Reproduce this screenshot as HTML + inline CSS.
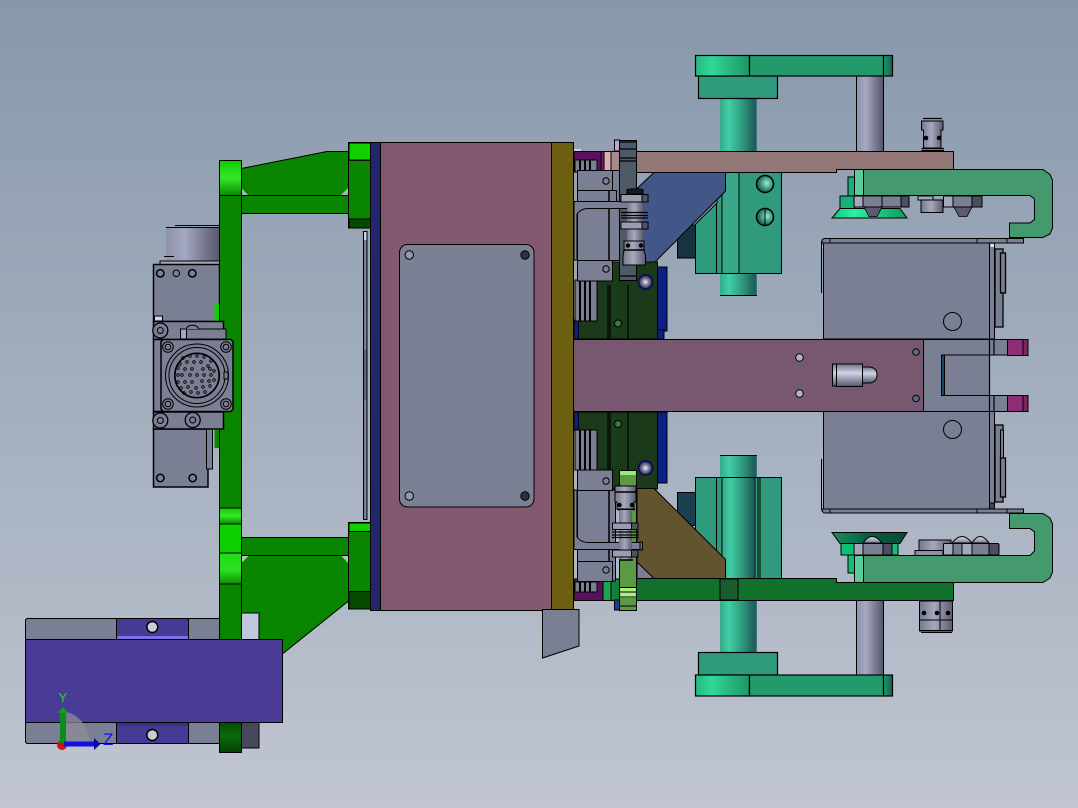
<!DOCTYPE html>
<html><head><meta charset="utf-8"><style>
html,body{margin:0;padding:0;background:#a0acbc}
svg{display:block}
text{font-family:"Liberation Sans",sans-serif}
</style></head><body>
<svg width="1078" height="808" viewBox="0 0 1078 808" xmlns="http://www.w3.org/2000/svg">
<defs>
<linearGradient id="bg" x1="0" y1="0" x2="0" y2="1"><stop offset="0" stop-color="#8798ab"/><stop offset="1" stop-color="#c0c5d1"/></linearGradient>
<linearGradient id="teal" x1="0" y1="0" x2="1" y2="0"><stop offset="0" stop-color="#35a98c"/><stop offset=".25" stop-color="#40cfa5"/><stop offset=".6" stop-color="#2f9a7e"/><stop offset=".95" stop-color="#1f5a58"/><stop offset="1" stop-color="#3f7f80"/></linearGradient>
<linearGradient id="gcyl" x1="0" y1="0" x2="1" y2="0"><stop offset="0" stop-color="#8e92ab"/><stop offset=".35" stop-color="#a4a8c2"/><stop offset="1" stop-color="#55546a"/></linearGradient>
<linearGradient id="flange" x1="0" y1="0" x2="1" y2="0"><stop offset="0" stop-color="#25b880"/><stop offset=".3" stop-color="#30d896"/><stop offset="1" stop-color="#1f9468"/></linearGradient>
<linearGradient id="fend" x1="0" y1="0" x2="1" y2="0"><stop offset="0" stop-color="#22986c"/><stop offset="1" stop-color="#176048"/></linearGradient>
<linearGradient id="ghi" x1="0" y1="0" x2="0" y2="1"><stop offset="0" stop-color="#0ccc02"/><stop offset=".5" stop-color="#36e82a"/><stop offset="1" stop-color="#088a00"/></linearGradient>
<linearGradient id="ghi2" x1="0" y1="0" x2="0" y2="1"><stop offset="0" stop-color="#22dc18"/><stop offset=".55" stop-color="#2ce020"/><stop offset="1" stop-color="#0a8e02"/></linearGradient>
<linearGradient id="gdark" x1="0" y1="0" x2="0" y2="1"><stop offset="0" stop-color="#044a04"/><stop offset=".45" stop-color="#0a6c0a"/><stop offset="1" stop-color="#033f03"/></linearGradient>
<linearGradient id="bolt" x1="0" y1="0" x2="1" y2="0"><stop offset="0" stop-color="#75778c"/><stop offset=".45" stop-color="#a6a8be"/><stop offset="1" stop-color="#5c5c70"/></linearGradient>
<linearGradient id="boltv" x1="0" y1="0" x2="0" y2="1"><stop offset="0" stop-color="#6f7186"/><stop offset=".4" stop-color="#d2d4e6"/><stop offset="1" stop-color="#55556a"/></linearGradient>
<linearGradient id="dome" x1="0" y1="0" x2="0" y2="1"><stop offset="0" stop-color="#d8daec"/><stop offset="1" stop-color="#7d7f96"/></linearGradient>
<linearGradient id="cup" x1="0" y1="0" x2="1" y2="0"><stop offset="0" stop-color="#10c878"/><stop offset=".3" stop-color="#2cf0a4"/><stop offset="1" stop-color="#0c9a60"/></linearGradient>
<linearGradient id="cup2" x1="0" y1="0" x2="1" y2="0"><stop offset="0" stop-color="#149060"/><stop offset=".5" stop-color="#0a5a40"/><stop offset="1" stop-color="#084a38"/></linearGradient>
<radialGradient id="ball"><stop offset="0" stop-color="#f0f2fa"/><stop offset=".55" stop-color="#6f7290"/><stop offset="1" stop-color="#2a2c50"/></radialGradient>
<radialGradient id="tball" cx=".6" cy=".45"><stop offset="0" stop-color="#8af0d0"/><stop offset="1" stop-color="#1f6a5c"/></radialGradient>
</defs>
<rect width="1078" height="808" fill="url(#bg)"/>

<!-- teal + gray cylinders -->
<g stroke="#000" stroke-width="1">
<rect x="720" y="96" width="37" height="200" fill="url(#teal)" stroke="none"/>
<rect x="720" y="455" width="37" height="200" fill="url(#teal)" stroke="none"/>
<path d="M720 295.500H757M720 455.500H757" fill="none"/>
<rect x="856.500" y="74" width="27" height="78" fill="url(#gcyl)"/>
<rect x="856.500" y="598" width="27" height="78" fill="url(#gcyl)"/>
</g>

<!-- flanges -->
<g stroke="#000" stroke-width="1.200">
<rect x="698.500" y="76" width="79" height="22.500" fill="#2f9a7c"/>
<rect x="695.500" y="55.500" width="54" height="20.500" fill="url(#flange)"/>
<rect x="749.500" y="55.500" width="134" height="20.500" fill="#229a6c"/>
<rect x="883.500" y="55.500" width="9" height="20.500" fill="url(#fend)"/>
<rect x="698.500" y="652.500" width="79" height="22.500" fill="#2f9a7c"/>
<rect x="695.500" y="675" width="54" height="21" fill="url(#flange)"/>
<rect x="749.500" y="675" width="134" height="21" fill="#229a6c"/>
<rect x="883.500" y="675" width="9" height="21" fill="url(#fend)"/>
</g>

<!-- left gray/purple carrier -->
<g stroke="#000" stroke-width="1">
<path d="M27 618.500H219.500V743.500H27L25.500 742V620Z" fill="#7b7f94"/>
<rect x="116.500" y="618.500" width="72" height="21" fill="#463b94"/>
<rect x="116.500" y="722.500" width="72" height="21" fill="#463b94"/>
<rect x="117" y="636" width="71" height="3" fill="#7f70e8" stroke="none"/>
<rect x="117" y="723" width="71" height="2.500" fill="#3a3078" stroke="none"/>
<circle cx="152.300" cy="627" r="5.500" fill="#c8ccd4" stroke-width="1.500"/>
<circle cx="152.300" cy="735" r="5.500" fill="#c8ccd4" stroke-width="1.500"/>
</g>

<!-- motor -->
<g stroke="#000" stroke-width="1">
<rect x="166" y="227" width="54" height="35" fill="url(#gcyl)" stroke="none"/>
<path d="M166 227.500H219M175 225.500H219M164 256.500H174" fill="none"/>
<rect x="160" y="261" width="60" height="3.500" fill="#a4a8bc"/>
<rect x="153.500" y="264.500" width="66" height="57" fill="#7b7f94" stroke-width="1.500"/>
<rect x="153.500" y="429" width="54.500" height="58" fill="#7b7f94" stroke-width="1.500"/>
<rect x="206.500" y="429" width="6" height="40" fill="#7b7f94"/>
<rect x="214.500" y="304" width="4.500" height="18" fill="#10d000" stroke="none"/>
<rect x="214.500" y="430" width="4.500" height="18" fill="#0a8500" stroke="none"/>
<g fill="none" stroke-width="1.500">
<circle cx="160.300" cy="273.300" r="3.700"/><circle cx="176.300" cy="273.300" r="3.300" stroke-width="1"/><circle cx="192.300" cy="273.300" r="3.700"/>
<circle cx="160.300" cy="478" r="3.700"/><circle cx="192.700" cy="478" r="3.700"/>
</g>
<rect x="154.500" y="316" width="8" height="5" fill="#d0d2dc"/>
</g>

<!-- green frame -->
<g stroke="#000" stroke-width="1">
<path d="M241.500 168.500L327 151.500H348.500V195.500H241.500Z" fill="#0a8500"/>
<path d="M241.500 188L248 195H241.500ZM348 188L341 195H348Z" fill="#aab4c4" stroke="none"/>
<rect x="241.500" y="195.500" width="107" height="18" fill="#0a8500"/>
<path d="M241.500 555H348.500V601L283 653.500H241.500Z" fill="#0a8500"/>
<path d="M241.500 563L249 555.500H241.500ZM348 563L341 555.500H348Z" fill="#b8bece" stroke="none"/>
<rect x="241.500" y="537.500" width="107" height="18" fill="#0a8500"/>
<rect x="241.500" y="613" width="17.500" height="27" fill="#c0c8de"/>
<rect x="241.500" y="722" width="17.500" height="26" fill="#47485a"/>
<rect x="219.500" y="160.500" width="22" height="35" fill="url(#ghi)"/>
<rect x="219.500" y="195.500" width="22" height="312.500" fill="#0a8500"/>
<rect x="219.500" y="508" width="22" height="16" fill="url(#ghi)"/>
<rect x="219.500" y="524" width="22" height="29" fill="#0cd000"/>
<rect x="219.500" y="553" width="22" height="31" fill="url(#ghi2)"/>
<rect x="219.500" y="584" width="22" height="140" fill="#0a8500"/>
<rect x="219.500" y="722" width="22" height="30.500" fill="url(#gdark)"/>
<!-- mounts -->
<rect x="348.500" y="142.500" width="22" height="85.500" fill="#0a8500"/>
<rect x="349" y="143" width="21.500" height="17" fill="#10d000"/><path d="M348.500 160.500H370.500"/>
<rect x="349" y="219" width="21.500" height="9" fill="#044a00"/>
<rect x="348.500" y="522.500" width="22" height="86.500" fill="#0a8500"/>
<rect x="349" y="523" width="21.500" height="8.500" fill="#10d000"/><path d="M348.500 531.500H370.500"/>
<rect x="349" y="591.500" width="21.500" height="17.500" fill="#044a00"/>
<!-- thin rod -->
<rect x="363.500" y="231.500" width="3.500" height="288" fill="#7b7f94"/>
<rect x="364" y="232" width="2.500" height="8" fill="#d0d4e0" stroke="none"/>
<rect x="364" y="350" width="2.500" height="50" fill="#606478" stroke="none"/>
<!-- plates -->
<rect x="370.500" y="142.500" width="10" height="468" fill="#23266c"/>
<rect x="380.500" y="142.500" width="171" height="468" fill="#835970"/>
<rect x="551.500" y="142.500" width="22" height="468" fill="#6c5f12"/>
<rect x="399.500" y="244.500" width="134.500" height="262.500" rx="8" fill="#7c8095"/>
<circle cx="409.300" cy="255" r="4.200" fill="#9498aa"/><circle cx="409.300" cy="496" r="4.200" fill="#9498aa"/>
<circle cx="525" cy="255" r="4.200" fill="#30303c"/><circle cx="525" cy="496" r="4.200" fill="#30303c"/>
<path d="M542.500 609.500H579V646L542.500 658Z" fill="#7b7f94"/>
</g>

<!-- clamps + connector over frame -->
<g stroke="#000" stroke-width="1">
<rect x="153.500" y="321.500" width="70" height="18" fill="#7b7f94" stroke-width="1.500"/>
<rect x="153.500" y="339.500" width="8" height="72" fill="#7b7f94" stroke-width="1.500"/>
<rect x="153.500" y="412" width="70" height="17" fill="#7b7f94" stroke-width="1.500"/>
<rect x="186" y="329" width="40" height="10" fill="#7b7f94"/>
<rect x="180.500" y="329" width="6" height="10" fill="#a6a9bc"/>
<circle cx="160.300" cy="330.500" r="7.500" fill="#7b7f94" stroke-width="1.300"/><circle cx="160.300" cy="330.500" r="3" fill="none"/>
<circle cx="160.300" cy="420.500" r="7.500" fill="#7b7f94" stroke-width="1.300"/><circle cx="160.300" cy="420.500" r="3" fill="none"/>
<circle cx="192.700" cy="420" r="7.500" fill="#7b7f94" stroke-width="1.300"/><circle cx="192.700" cy="420" r="3" fill="none"/>
<path d="M186 329a7 6 0 0 1 13 0" fill="#7b7f94"/>
</g>
<g stroke="#000" fill="none" stroke-width="1">
<path d="M163 339.500H231L233 342V409L231 411.500H163L161 409V342Z" fill="#7b7f94" stroke-width="1.500"/>
<circle cx="168" cy="347" r="5.300"/><circle cx="168" cy="347" r="2.800"/>
<circle cx="226" cy="347" r="5.300"/><circle cx="226" cy="347" r="2.800"/>
<circle cx="168" cy="404" r="5.300"/><circle cx="168" cy="404" r="2.800"/>
<circle cx="226" cy="404" r="5.300"/><circle cx="226" cy="404" r="2.800"/>
<circle cx="197" cy="375.500" r="31.500"/><circle cx="197" cy="375.500" r="28"/><circle cx="197" cy="375.500" r="22.200" stroke-width="1.700"/>
<rect x="224" y="372" width="4" height="7" fill="#7b7f94"/>
<g stroke-width=".8">
<circle cx="183" cy="358" r="1.300"/><circle cx="190" cy="356" r="1.300"/><circle cx="197" cy="356" r="1.300"/><circle cx="204" cy="357" r="1.300"/><circle cx="211" cy="361" r="1.300"/>
<circle cx="180" cy="364" r="1.300"/><circle cx="187" cy="362" r="1.300"/><circle cx="194" cy="362" r="1.300"/><circle cx="201" cy="362" r="1.300"/><circle cx="208" cy="366" r="1.300"/>
<circle cx="178" cy="368" r="1.300"/><circle cx="185" cy="369" r="1.300"/><circle cx="192" cy="369" r="1.300"/><circle cx="203" cy="369" r="1.300"/><circle cx="210" cy="369" r="1.300"/><circle cx="214" cy="371" r="1.300"/>
<circle cx="178" cy="375" r="1.300"/><circle cx="182" cy="375" r="1.300"/><circle cx="190" cy="375" r="1.300"/><circle cx="197" cy="375" r="1.300"/><circle cx="204" cy="375" r="1.300"/><circle cx="211" cy="375" r="1.300"/>
<circle cx="178" cy="382" r="1.300"/><circle cx="185" cy="382" r="1.300"/><circle cx="192" cy="382" r="1.300"/><circle cx="202" cy="381" r="1.300"/><circle cx="209" cy="381" r="1.300"/><circle cx="214" cy="380" r="1.300"/>
<circle cx="181" cy="388" r="1.300"/><circle cx="188" cy="387" r="1.300"/><circle cx="196" cy="388" r="1.300"/><circle cx="203" cy="387" r="1.300"/><circle cx="210" cy="386" r="1.300"/>
<circle cx="184" cy="393" r="1.300"/><circle cx="191" cy="392" r="1.300"/><circle cx="198" cy="393" r="1.300"/><circle cx="205" cy="392" r="1.300"/>
</g>
</g>

<!-- purple front block -->
<rect x="25.500" y="639.500" width="257" height="83" fill="#4a3c96" stroke="#000" stroke-width="1"/>

<!-- green/blue blocks behind slides -->
<g stroke="#000" stroke-width="1">
<rect x="657.500" y="267" width="9.500" height="64" fill="#0c1f85"/><rect x="657.500" y="330" width="6.500" height="9" fill="#0c1f85"/>
<rect x="657.500" y="412" width="9.500" height="71" fill="#0c1f85"/>
<rect x="574" y="320" width="5" height="19" fill="#0c1f85"/><rect x="574" y="412" width="5" height="18" fill="#0c1f85"/>
<rect x="578.500" y="262" width="79" height="77" fill="#1a3a1a"/>
<rect x="578.500" y="412" width="79" height="77" fill="#1a3a1a"/>
<path d="M608 285V339M610 285V339M628 285V339M608 412V470M610 412V470M628 412V470" stroke-width="1.200"/>
<circle cx="618" cy="323.500" r="3.500" fill="#3c7a3c"/>
<circle cx="618" cy="424" r="3.500" fill="#3c7a3c"/>
</g>

<!-- teal blocks -->
<g stroke="#000" stroke-width="1">
<rect x="677.500" y="225" width="18" height="33" fill="#15343f"/>
<rect x="677.500" y="492.500" width="18" height="33" fill="#1a3f4e"/>
<path d="M695.500 224L717 203V172.500H781.500V273.500H695.500Z" fill="#2f9a7c"/>
<rect x="722" y="172.500" width="17" height="101" fill="#3aa788"/>
<path d="M716.500 203V273M722 195V273M739 172V273" fill="none"/>
<rect x="695.500" y="477.500" width="86" height="101" fill="#2f9a7c"/>
<rect x="722" y="477.500" width="33" height="101" fill="url(#teal)" stroke="none"/>
<path d="M716.500 477V578M722 477V578M755 477V578M758 477V578M760 477V578M695.500 477.500H781.500" fill="none"/>
<circle cx="765" cy="184" r="8.500" fill="url(#tball)" stroke-width="1.500"/>
<circle cx="765" cy="217" r="8.500" fill="url(#tball)" stroke-width="1.500"/><path d="M765 209V225"/>
<path d="M654 172.500H725.500V191L655 262H637V188.500Z" fill="#425688"/>
<path d="M654 488.500L725.500 559.500V578.500H637V488.500Z" fill="#62542f"/>
<path d="M637 562L654 578.500H637Z" fill="#7b7f94"/>
</g>

<!-- upper and lower bars -->
<g stroke="#000" stroke-width="1">
<path d="M636 151.500H953.500V169.500H836.500V172.500H636Z" fill="#937676"/>
<path d="M636 578.500H836.500V582.500H953.500V600.500H636Z" fill="#10702c"/>
<rect x="720" y="579" width="18" height="21" fill="#1a5c30"/>
<rect x="574" y="151.500" width="27" height="20.500" fill="#5a1060"/>
<rect x="601" y="151.500" width="3" height="20.500" fill="#7a1a6a"/>
<rect x="604" y="151.500" width="7" height="20.500" fill="#dcb0b0"/>
<rect x="611" y="151.500" width="9" height="20.500" fill="#a88a8a"/>
<rect x="574" y="149" width="7" height="2" fill="#d0d4e0" stroke="none"/>
<rect x="574" y="579" width="29" height="21.500" fill="#5a1060"/>
<rect x="603" y="579" width="8" height="21.500" fill="#16a84a"/>
<rect x="611" y="579" width="9" height="21.500" fill="#128038"/>
<rect x="614.500" y="140" width="5" height="11" fill="#c0a8d0"/>
<rect x="614.500" y="600" width="5" height="10" fill="#1e3a9a"/>
<rect x="619.500" y="140.500" width="17" height="140" fill="#4f5a68"/>
<path d="M620 142H636M620 149H636M620 158H636M620 161H636M620 276H636" stroke-width="1.200"/>
<rect x="619.500" y="470.500" width="17" height="140" fill="#5a9a44"/>
<rect x="620" y="471" width="16" height="4" fill="#96ee70" stroke="none"/>
<rect x="620" y="588" width="16" height="10" fill="#a8f080" stroke="none"/>
<path d="M620 587.500H636M620 592H636M620 597H636M620 606H636" stroke-width="1"/>
</g>

<!-- fins -->
<g stroke="#000" stroke-width="1">
<g fill="#7b7f94">
<rect x="575" y="160" width="22" height="12"/><rect x="575" y="280" width="22" height="41"/>
<rect x="575" y="430" width="22" height="40"/><rect x="575" y="582" width="22" height="10"/>
</g>
<path d="M580 160V172M585 160V172M590 160V172M580 280V321M585 280V321M590 280V321M580 430V470M585 430V470M590 430V470M580 582V592M585 582V592M590 582V592" stroke-width="2"/>
</g>

<!-- gray slides -->
<g stroke="#000" stroke-width="1">
<rect x="577.500" y="170.500" width="42" height="90" fill="#7b7f94"/>
<rect x="577.500" y="490" width="38" height="91" fill="#7b7f94"/>
<rect x="577.500" y="170.500" width="35" height="20" fill="#7b7f94"/>
<rect x="577.500" y="190.500" width="39" height="11" fill="#7b7f94"/>
<rect x="577.500" y="260.500" width="35" height="20.500" fill="#7b7f94"/>
<path d="M609 190V260" fill="none" stroke-width="1.500"/>
<rect x="577.500" y="470" width="35" height="20.500" fill="#7b7f94"/>
<rect x="577.500" y="561.500" width="35" height="20" fill="#7b7f94"/>
<path d="M609 490V561" fill="none" stroke-width="1.500"/>
<circle cx="606" cy="181" r="3.200" fill="none"/><circle cx="606" cy="269" r="3.200" fill="none"/>
<circle cx="606" cy="481" r="3.200" fill="none"/><circle cx="606" cy="570" r="3.200" fill="none"/>
<path d="M574 201.500H640V208.500H588Q581 208.500 577 214V260H574Z" fill="#7b7f94"/>
<path d="M574 549.500H640V542.500H588Q581 542.500 577 537V490H574Z" fill="#7b7f94"/>
<rect x="640" y="198" width="2.500" height="11" fill="#6c6f82"/>
<rect x="640" y="542" width="2.500" height="8" fill="#6c6f82"/>
<!-- upper clamp bolt -->
<rect x="627" y="192" width="16" height="50" fill="url(#bolt)" stroke="none"/>
<path d="M627 189.500Q635 188 643 189.500V194H627Z" fill="#1a1a20"/>
<rect x="621" y="194.500" width="21" height="7.500" fill="#9a9cb0"/><rect x="642" y="194.500" width="6" height="7.500" fill="#505264"/>
<rect x="621" y="222" width="21" height="7" fill="#9a9cb0"/><rect x="642" y="222" width="6" height="7" fill="#505264"/>
<path d="M621 212.500H648M621 215.500H648M621 218H648" stroke-width="1.200"/>
<path d="M624 241H644V250L645.500 256V265H623V256L624 250Z" fill="url(#bolt)"/>
<path d="M624 250H644" stroke-width="1.500"/>
<circle cx="628" cy="245.500" r="1.700" fill="#000"/><circle cx="641" cy="245.500" r="1.700" fill="#000"/>
<!-- lower clamp bolt -->
<path d="M615 486H636V502H634V509H617V502H615Z" fill="url(#bolt)"/>
<path d="M615 492H636M617 509.500H635" stroke-width="1.500"/>
<rect x="619" y="510" width="13" height="50" fill="url(#bolt)" stroke="none"/>
<rect x="612.500" y="523" width="19" height="6.500" fill="#9a9cb0"/><rect x="631.500" y="523" width="6.500" height="6.500" fill="#505264"/>
<path d="M612 532H639M612 535H639M612 537.500H639" stroke-width="1.200"/>
<rect x="612.500" y="550" width="19" height="7" fill="#9a9cb0"/><rect x="631.500" y="550" width="6.500" height="7" fill="#505264"/>
<circle cx="619.500" cy="505" r="1.700" fill="#000"/><circle cx="632" cy="505" r="1.700" fill="#000"/>
<path d="M619 560H633" stroke-width="1.500"/>
<circle cx="645.500" cy="282" r="7" fill="url(#ball)" stroke="#10104c" stroke-width="2"/>
<circle cx="645.500" cy="468" r="7" fill="url(#ball)" stroke="#10104c" stroke-width="2"/>
</g>

<!-- gray boxes at right -->
<g stroke="#000" stroke-width="1">
<path d="M821.500 241V293M821.500 459V510" fill="none"/>
<rect x="823.500" y="243" width="166" height="96" fill="#7b7f94"/>
<rect x="989.500" y="243" width="5" height="96" fill="#7b7f94"/>
<rect x="823.500" y="411" width="166" height="98" fill="#7b7f94"/>
<rect x="989.500" y="411" width="5" height="98" fill="#7b7f94"/>
<rect x="990.500" y="244" width="3.500" height="3" fill="#e0e4ea" stroke="none"/>
<path d="M824 238.500H1023.500V243H822V240Z" fill="#7b7f94"/>
<path d="M822 509H1023.500V513H824L822 511Z" fill="#7b7f94"/>
<path d="M830 238V243M977 238V243M1007 238V243M830 509V513M977 509V513M1007 509V513" fill="none"/>
<rect x="995" y="249" width="8" height="78" fill="#7b7f94" stroke-width="1.300"/>
<rect x="1000.500" y="253" width="5" height="40" fill="#7b7f94" stroke-width="1.300"/>
<rect x="995" y="425" width="8" height="77" fill="#7b7f94" stroke-width="1.300"/>
<rect x="1000.500" y="430" width="3" height="28" fill="#7b7f94"/>
<rect x="1000.500" y="458" width="5" height="39" fill="#7b7f94" stroke-width="1.300"/>
<circle cx="952.500" cy="321.500" r="9" fill="none"/>
<circle cx="952.500" cy="429.500" r="9" fill="none"/>
<rect x="989.500" y="503" width="5" height="6" fill="#404048"/>
</g>

<!-- centre arm -->
<g stroke="#000" stroke-width="1">
<rect x="573.500" y="339.500" width="350" height="72" fill="#785870"/>
<path d="M923.500 339.500H1007.500V355H941.500V395.500H1007.500V411.500H923.500Z" fill="#7b7f94"/>
<rect x="941.500" y="355" width="48" height="40.500" fill="#7b7f94"/>
<rect x="941.500" y="355" width="3" height="40.500" fill="#104c68"/>
<path d="M989.500 339.500V411.500M994 339V355M994 396V411" stroke-width="1.200"/>
<rect x="1007.500" y="339.500" width="15.500" height="16" fill="#8e2c74"/><rect x="1023" y="339.500" width="5" height="16" fill="#7a2662"/>
<rect x="1007.500" y="395.500" width="15.500" height="16" fill="#8e2c74"/><rect x="1023" y="395.500" width="5" height="16" fill="#7a2662"/>
<circle cx="799.500" cy="357.500" r="3.800" fill="#aeb4c2"/><circle cx="799.500" cy="393.500" r="3.800" fill="#aeb4c2"/>
<circle cx="916" cy="352" r="3.300" fill="#5e6a80"/><circle cx="916" cy="398.500" r="3.300" fill="#5e6a80"/>
<rect x="832.500" y="364" width="4" height="22" fill="url(#boltv)"/>
<rect x="836.500" y="364" width="26" height="22.500" fill="url(#boltv)"/>
<path d="M862.500 367H870Q877 368 877 375Q877 382 870 383H862.500Z" fill="url(#boltv)"/>
</g>

<!-- suction & clamp hardware -->
<g stroke="#000" stroke-width="1">
<!-- top fitting -->
<path d="M921.500 121H943V130H941V148H923.500V130H921.500Z" fill="url(#bolt)"/>
<path d="M923 118.500H942M921.500 148.500H944M921.500 150.500H944" stroke-width="1.300" fill="none"/>
<circle cx="926" cy="138" r="1.800" fill="#000"/><circle cx="939" cy="138" r="1.800" fill="#000"/>
<!-- top cup -->
<path d="M832 218H907L900 208.500H840Z" fill="url(#cup)"/>
<path d="M848 177H855V196H848ZM840 196H855V208.500H840Z" fill="#18b078"/>
<path d="M864 207H882L877 216.500H869Z" fill="#5a5c6e" stroke-width=".8"/>
<rect x="854" y="196" width="9" height="11" fill="#a4a8bc"/>
<rect x="863" y="196" width="19" height="11" fill="#7b7f94"/>
<rect x="882" y="196" width="19" height="11" fill="#7b7f94"/>
<rect x="901" y="196" width="8" height="11" fill="#4e4e60"/>
<!-- top middle -->
<rect x="921" y="200" width="22" height="12.500" fill="url(#bolt)"/>
<rect x="918" y="196" width="15" height="4" fill="#a4a8bc"/>
<path d="M954 207H972L967 216.500H959Z" fill="#5a5c6e" stroke-width=".8"/>
<rect x="943.500" y="196" width="9.500" height="11" fill="#a4a8bc"/>
<rect x="953" y="196" width="19" height="11" fill="#7b7f94"/>
<rect x="972" y="196" width="10" height="11" fill="#4e4e60"/>
<!-- lower cup -->
<path d="M832 532.500H907L900 543.500H840Z" fill="url(#cup2)"/>
<path d="M841 543.500H898V555H841ZM848 555H855V573H848Z" fill="#10c078"/>
<path d="M863 543Q872 530 882 543Z" fill="url(#dome)"/>
<rect x="854" y="543.500" width="9" height="11.500" fill="#a4a8bc"/>
<rect x="863" y="543.500" width="20" height="11.500" fill="#7b7f94"/>
<rect x="883" y="543.500" width="9" height="11.500" fill="#4e4e60"/>
<!-- lower middle -->
<rect x="919" y="540" width="32" height="10.500" fill="url(#bolt)"/>
<rect x="915" y="550.500" width="28" height="5" fill="#8c90a2"/>
<path d="M952 543Q962 530 972 543ZM972 543Q980 530 989 543Z" fill="url(#dome)"/>
<rect x="943.500" y="543.500" width="9.500" height="11.500" fill="#a4a8bc" rx="1"/>
<rect x="953" y="543.500" width="9" height="11.500" fill="#7b7f94"/>
<rect x="962" y="543.500" width="10" height="11.500" fill="#a4a8bc"/>
<rect x="972" y="543.500" width="17" height="11.500" fill="#7b7f94"/>
<rect x="989" y="543.500" width="10" height="11.500" fill="#4e4e60" rx="1.500"/>
<!-- bottom fitting -->
<rect x="919.500" y="601" width="33" height="30" fill="url(#bolt)"/>
<path d="M940 601V630M919 620H953M919 630.500H953M921 632.500H952" stroke-width="1"/>
<circle cx="924" cy="613" r="1.800" fill="#000"/><circle cx="937" cy="613" r="1.800" fill="#000"/><circle cx="948" cy="613" r="1.800" fill="#000"/>
<!-- top C clamp -->
<path d="M854.500 169.500H1043L1050 174.500L1052.500 180V228L1050 234L1043 237.500H1009.500V223H1030L1034.500 219.500V199L1030 195.500H854.500Z" fill="#44996f"/>
<rect x="854.500" y="169.500" width="9" height="26" fill="#5acb9a"/>
<!-- lower C clamp -->
<path d="M854.500 582.500H1043L1050 578L1052.500 572V524L1050 518L1043 513.500H1009.500V528.500H1030L1034.500 532V551L1030 555.500H854.500Z" fill="#44996f"/>
<rect x="854.500" y="555.500" width="9" height="27" fill="#5acb9a"/>
</g>

<!-- triad -->
<path d="M63 712A27 34 0 0 1 90 746H63Z" fill="#8c8c98" opacity=".75"/>
<circle cx="62" cy="745" r="5" fill="#d01414"/>
<rect x="60" y="712" width="6" height="31" fill="#0c8a1a"/>
<path d="M58 713L63 707L68 713Z" fill="#10a020"/>
<rect x="64" y="741.500" width="31" height="5" fill="#1010e0"/>
<path d="M94 738L100.500 744L94 750Z" fill="#0a0a90"/>
<text x="58.500" y="702" font-size="13" fill="#22dd22">Y</text>
<text x="103" y="745" font-size="17" fill="#1414e0">Z</text>
</svg>
</body></html>
